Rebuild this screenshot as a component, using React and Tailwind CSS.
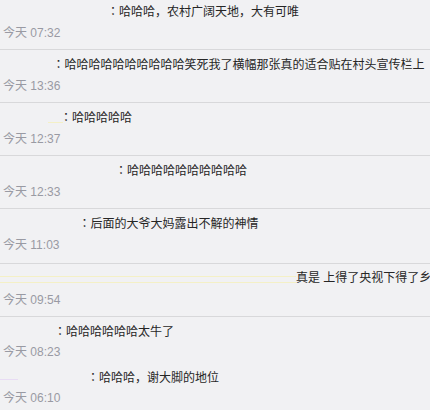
import React from "react";

const Colon = () => (
  <span className="font-['Noto_Sans_CJK_TC',sans-serif]">：</span>
);

function Row({ lead, children, time, rowCls, timeCls }) {
  return (
    <div className={rowCls}>
      <div className="flex h-[20px] items-stretch whitespace-nowrap overflow-hidden text-[12px] leading-[20px] text-[#262626]">
        {lead}
        <div className="shrink-0">{children}</div>
      </div>
      <div className={timeCls}>{time}</div>
    </div>
  );
}

export default function App() {
  const font = "font-['Liberation_Sans','Noto_Sans_CJK_SC',sans-serif]";
  const time = "h-[20px] pl-[3px] text-[12px] leading-[20px] text-[#999aa3] mt-[2px]";
  const time2 = "h-[20px] pl-[3px] text-[12px] leading-[20px] text-[#999aa3] mt-[1px]";
  return (
    <div className={`h-[415px] w-[430px] overflow-hidden bg-white ${font}`}>
      <div className="-mt-[3px] flex flex-col bg-[#f1f1f3]">
        <Row
          rowCls="border-b border-[#d8d8da] pt-[4px] pb-[6px]"
          timeCls={time}
          time="今天 07:32"
          lead={<div className="w-[107px] shrink-0" />}
        >
          <Colon />哈哈哈，农村广阔天地，大有可唯
        </Row>
        <Row
          rowCls="border-b border-[#d8d8da] pt-[4px] pb-[6px]"
          timeCls={time}
          time="今天 13:36"
          lead={<div className="w-[52.5px] shrink-0" />}
        >
          <Colon />哈哈哈哈哈哈哈哈哈哈笑死我了横幅那张真的适合贴在村头宣传栏上
        </Row>
        <Row
          rowCls="border-b border-[#d8d8da] pt-[4px] pb-[6px]"
          timeCls={time}
          time="今天 12:37"
          lead={
            <div className="flex w-[60px] shrink-0 items-start justify-end">
              <div className="-mr-[3px] mt-[15px] h-px w-[15px] bg-[#f4f0c6]" />
            </div>
          }
        >
          <Colon />哈哈哈哈哈
        </Row>
        <Row
          rowCls="border-b border-[#d8d8da] pt-[4px] pb-[6px]"
          timeCls={time}
          time="今天 12:33"
          lead={<div className="w-[115px] shrink-0" />}
        >
          <Colon />哈哈哈哈哈哈哈哈哈哈
        </Row>
        <Row
          rowCls="border-b border-[#d8d8da] pt-[4px] pb-[8px]"
          timeCls={time}
          time="今天 11:03"
          lead={<div className="w-[78.5px] shrink-0" />}
        >
          <Colon />后面的大爷大妈露出不解的神情
        </Row>
        <Row
          rowCls="border-b border-[#d8d8da] pt-[4px] pb-[6px]"
          timeCls={time}
          time="今天 09:54"
          lead={
            <div className="flex w-[296px] shrink-0 items-start">
              <div className="mt-[8px] h-[7px] w-full border-y border-[#f4f0c6]" />
            </div>
          }
        >
          真是 上得了央视下得了乡村
        </Row>
        <Row
          rowCls="pt-[4px] pb-[1px]"
          timeCls={time2}
          time="今天 08:23"
          lead={<div className="w-[54px] shrink-0" />}
        >
          <Colon />哈哈哈哈哈哈太牛了
        </Row>
        <Row
          rowCls="w-[429px] pt-[4px] pb-[2px]"
          timeCls={time2}
          time="今天 06:10"
          lead={
            <div className="flex w-[87px] shrink-0 items-start">
              <div className="mt-[12px] h-px w-[18px] bg-[#e8dcf4]" />
            </div>
          }
        >
          <Colon />哈哈哈，谢大脚的地位
        </Row>
      </div>
    </div>
  );
}
